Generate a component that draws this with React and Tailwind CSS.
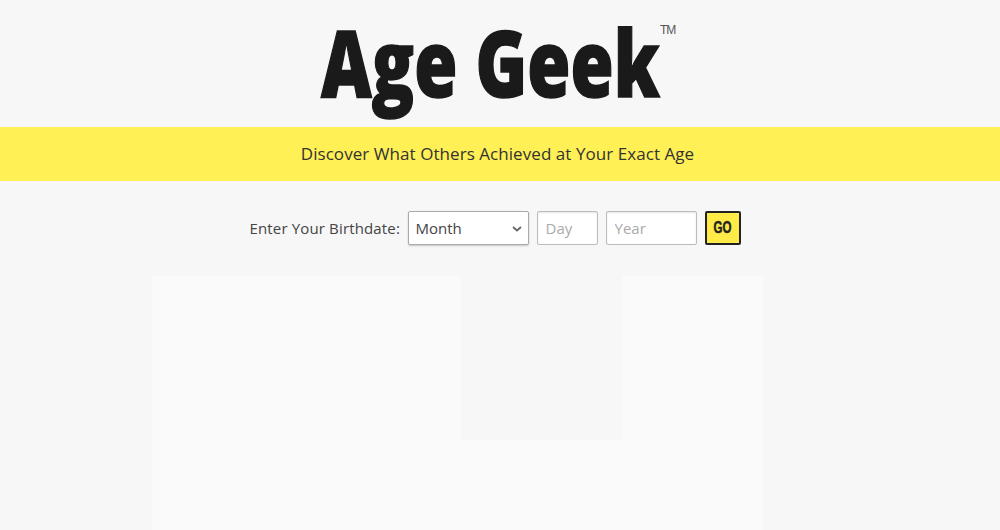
export default function App() {
  return (
    <div className="h-[530px] overflow-hidden bg-[#f7f7f7] font-['Open_Sans',sans-serif] text-[#333]">
      <header className="h-[127px] flex justify-center">
        <div className="relative mt-[7px] h-[110px] w-[340px] ml-[-18px]">
          <h1 className="origin-left scale-x-[0.76] font-['Open_Sans',sans-serif] font-extrabold text-[92px] leading-[110px] text-[#1a1a1a] whitespace-nowrap [-webkit-text-stroke:1.5px_#1a1a1a]">
            Age Geek
          </h1>
          <span className="absolute left-full top-[17px] ml-[-1px] font-['Liberation_Sans',sans-serif] text-[12px] leading-none tracking-[-1px] text-[#555]">TM</span>
        </div>
      </header>

      <div className="h-[54px] bg-[#fff055] flex items-center justify-center pr-[5px] text-[17px] tracking-[0.06px] text-[#333]">
        Discover What Others Achieved at Your Exact Age
      </div>

      <form className="mt-[30px] flex items-center justify-center h-[34px] pr-[10px] text-[15px]">
        <label className="w-[150px] mr-[8px] whitespace-nowrap tracking-[0.15px] text-[#444]">Enter Your Birthdate:</label>
        <div className="relative mr-[8px]">
          <select defaultValue="" className="appearance-none w-[121px] h-[34px] pl-[7px] bg-white border border-[#aaa] rounded-[2px] shadow-[0_1px_2px_rgba(0,0,0,0.2)] text-[#444] text-[15px]">
            <option value="">Month</option>
          </select>
          <svg className="absolute right-[7px] top-[15px] pointer-events-none" width="10" height="6" viewBox="0 0 10 6" fill="none" stroke="#666" strokeWidth="1.8">
            <path d="M1 1l4 3.5L9 1" />
          </svg>
        </div>
        <input placeholder="Day" className="w-[61px] h-[34px] mr-[8px] px-[8px] bg-white border border-[#bbb] rounded-[2px] shadow-[inset_0_1px_2px_rgba(0,0,0,0.1)] text-[15px] placeholder:text-[#aaa]" />
        <input placeholder="Year" className="w-[91px] h-[34px] mr-[8px] px-[8px] bg-white border border-[#bbb] rounded-[2px] shadow-[inset_0_1px_2px_rgba(0,0,0,0.1)] text-[15px] placeholder:text-[#aaa]" />
        <button type="button" className="w-[36px] h-[34px] bg-[#ffeb47] border-2 border-[#222] rounded-[2px] text-[#222]">
          <span className="inline-block scale-x-[0.72] font-['Liberation_Sans',sans-serif] font-bold text-[16px] [-webkit-text-stroke:0.5px_#222]">GO</span>
        </button>
      </form>

      <div className="mt-[31px] ml-[152px] w-[611px] h-[300px] bg-[#fafafa] flex items-start">
        <div className="w-[309px]" />
        <div className="w-[161px] h-[164px] bg-[#f7f7f7]" />
      </div>
    </div>
  );
}
